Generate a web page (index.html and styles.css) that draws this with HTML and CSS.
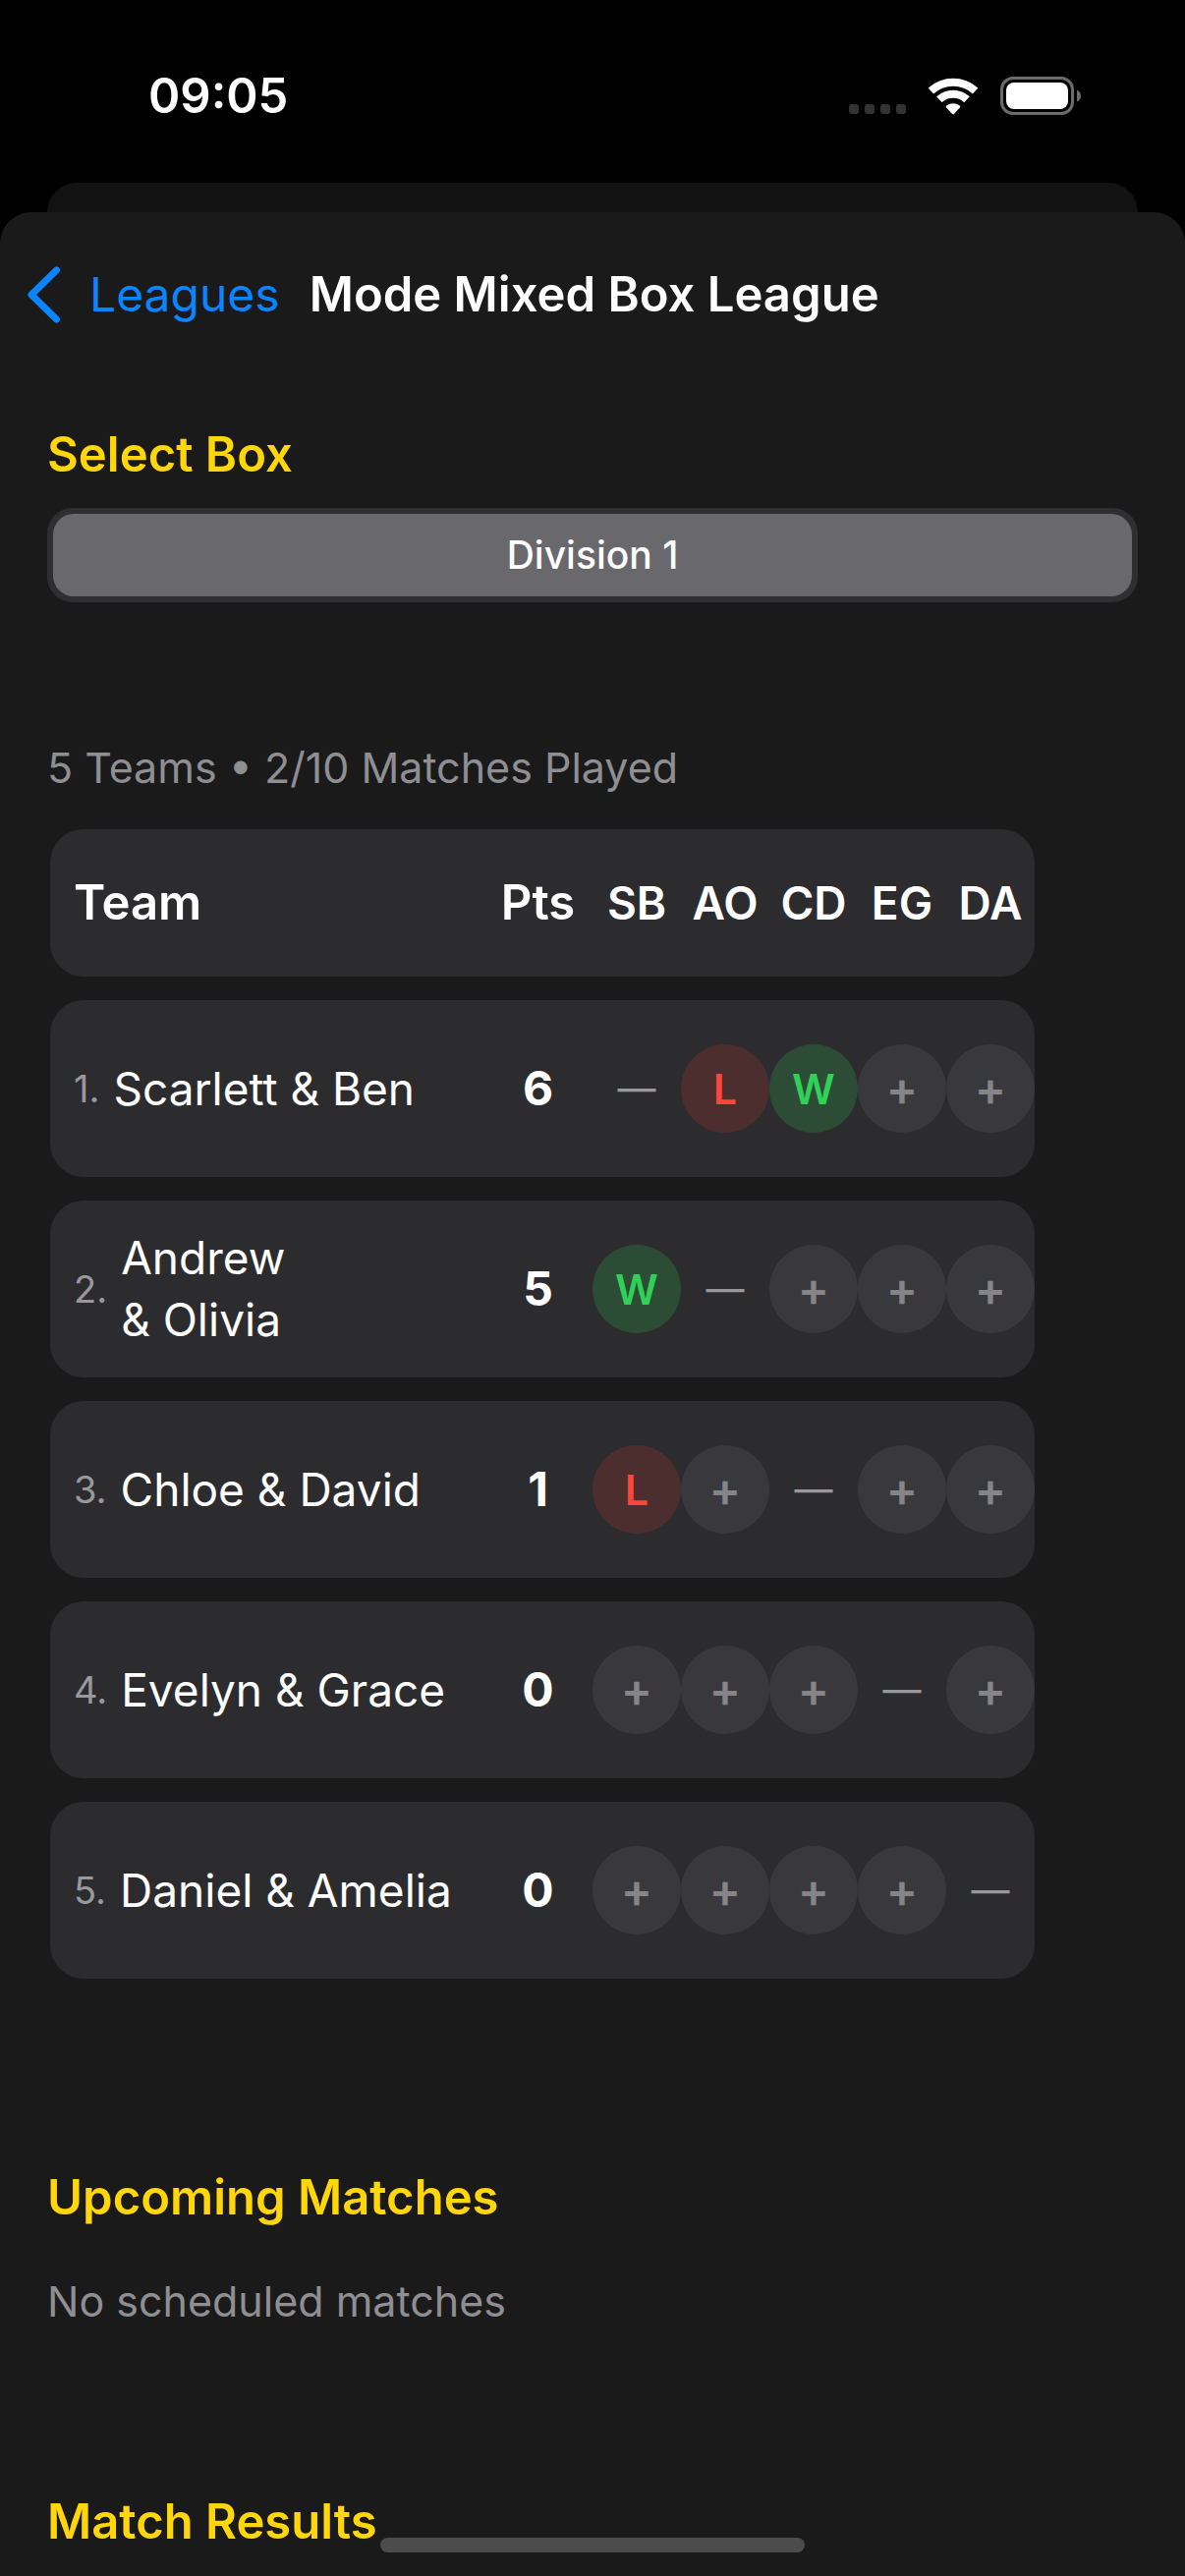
FILE: index.html
```html
<!DOCTYPE html>
<html lang="en">
<head>
  <meta charset="utf-8">
  <meta name="viewport" content="width=device-width">
  <title>Mode Mixed Box League</title>
  <link rel="stylesheet" href="styles.css">
</head>
<body>
  <div class="status-bar">
    <time class="clock" datetime="09:05">09:05</time>
    <div class="indicators">
      <svg width="58" height="40" viewBox="0 0 58 40" fill="#333" aria-hidden="true">
        <rect x="0" y="28" width="10" height="10" rx="3"/>
        <rect x="16" y="28" width="10" height="10" rx="3"/>
        <rect x="32" y="28" width="10" height="10" rx="3"/>
        <rect x="48" y="28" width="10" height="10" rx="3"/>
      </svg>
      <svg width="50" height="40" viewBox="0 0 50 40" aria-hidden="true">
        <g fill="none" stroke="#fff" stroke-width="8">
          <path d="M2.4 14.5A33.4 33.4 0 0 1 47.6 14.5"/>
          <path d="M10.9 23.2A20.8 20.8 0 0 1 39.1 23.2"/>
        </g>
        <path fill="#fff" d="M18 31.2Q17.200 30.200 18.200 29.400A11.500 11.500 0 0 1 31.800 29.400Q32.800 30.200 32 31.200L26 37.900Q25 38.700 24 37.900Z"/>
      </svg>
      <svg width="82" height="40" viewBox="0 0 82 40" aria-hidden="true">
        <rect x="1.500" y="1.500" width="72" height="36" rx="11.500" fill="none" stroke="#6b6b6b" stroke-width="3"/>
        <rect x="6" y="6" width="63" height="27" rx="8" fill="#fff"/>
        <path d="M78 13.500Q82 15.500 82 19.500T78 25.500Z" fill="#6b6b6b"/>
      </svg>
    </div>
  </div>

  <div class="sheet-behind"></div>
  <main class="sheet">
    <header class="nav">
      <a class="back" href="#leagues">
        <svg width="34" height="58" viewBox="0 0 34 58" fill="none" stroke="#0a84ff" stroke-width="7" stroke-linecap="round" stroke-linejoin="round" aria-hidden="true">
          <path d="M29.500 4L4 29L29.500 54"/>
        </svg>
        <span>Leagues</span>
      </a>
      <h1 class="title">Mode Mixed Box League</h1>
    </header>

    <section class="select-box">
      <h2 class="heading" id="select-box">Select Box</h2>
      <div class="segments" role="radiogroup" aria-labelledby="select-box">
        <input class="segment-input" type="radio" id="division-1" name="box" checked>
        <label class="segment" for="division-1">Division 1</label>
      </div>
    </section>

    <section class="standings">
      <p class="note">5 Teams • 2/10 Matches Played</p>
      <div class="table-scroll">
        <table class="grid">
          <colgroup>
            <col class="col-team"><col class="col-points">
            <col class="col-match" span="5">
          </colgroup>
          <thead>
            <tr>
              <th class="team" scope="col">Team</th>
              <th scope="col">Pts</th>
              <th class="rival" scope="col">SB</th>
              <th class="rival" scope="col">AO</th>
              <th class="rival" scope="col">CD</th>
              <th class="rival" scope="col">EG</th>
              <th class="rival" scope="col">DA</th>
            </tr>
          </thead>
          <tbody>
            <tr>
              <th class="team" scope="row"><div class="entry"><span class="rank">1.</span><span>Scarlett &amp; Ben</span></div></th>
              <td class="points">6</td>
              <td class="self">—</td>
              <td><button class="result loss" type="button">L</button></td>
              <td><button class="result win" type="button">W</button></td>
              <td><button class="result" type="button">+</button></td>
              <td><button class="result" type="button">+</button></td>
            </tr>
            <tr>
              <th class="team" scope="row"><div class="entry"><span class="rank">2.</span><span>Andrew<br>&amp; Olivia</span></div></th>
              <td class="points">5</td>
              <td><button class="result win" type="button">W</button></td>
              <td class="self">—</td>
              <td><button class="result" type="button">+</button></td>
              <td><button class="result" type="button">+</button></td>
              <td><button class="result" type="button">+</button></td>
            </tr>
            <tr>
              <th class="team" scope="row"><div class="entry"><span class="rank">3.</span><span>Chloe &amp; David</span></div></th>
              <td class="points">1</td>
              <td><button class="result loss" type="button">L</button></td>
              <td><button class="result" type="button">+</button></td>
              <td class="self">—</td>
              <td><button class="result" type="button">+</button></td>
              <td><button class="result" type="button">+</button></td>
            </tr>
            <tr>
              <th class="team" scope="row"><div class="entry"><span class="rank">4.</span><span>Evelyn &amp; Grace</span></div></th>
              <td class="points">0</td>
              <td><button class="result" type="button">+</button></td>
              <td><button class="result" type="button">+</button></td>
              <td><button class="result" type="button">+</button></td>
              <td class="self">—</td>
              <td><button class="result" type="button">+</button></td>
            </tr>
            <tr>
              <th class="team" scope="row"><div class="entry"><span class="rank">5.</span><span>Daniel &amp; Amelia</span></div></th>
              <td class="points">0</td>
              <td><button class="result" type="button">+</button></td>
              <td><button class="result" type="button">+</button></td>
              <td><button class="result" type="button">+</button></td>
              <td><button class="result" type="button">+</button></td>
              <td class="self">—</td>
            </tr>
          </tbody>
        </table>
      </div>
    </section>

    <section class="upcoming">
      <h2 class="heading">Upcoming Matches</h2>
      <p class="note">No scheduled matches</p>
    </section>

    <section class="results">
      <h2 class="heading">Match Results</h2>
    </section>
  </main>
  <div class="home-indicator"></div>
</body>
</html>
```

FILE: styles.css
```css
* {
  box-sizing: border-box;
}

body {
  margin: 0;
  min-height: 100vh;
  display: flex;
  flex-direction: column;
  background: #000;
  color: #fff;
  font-family: Inter, "Liberation Sans", sans-serif;
  font-size: 48px;
  line-height: 60px;
}

h1, h2, p {
  margin: 0;
}

/* Status bar */
.status-bar {
  display: flex;
  justify-content: space-between;
  align-items: center;
  padding: 68px 106px 58px 151px;
}

.clock {
  font-size: 49px;
  font-weight: 600;
}

.indicators {
  display: flex;
  gap: 23px;
}

/* Stacked sheets */
.sheet-behind {
  height: 30px;
  margin: 0 48px;
  border-radius: 30px 30px 0 0;
  background: #121212;
}

.sheet {
  flex: 1;
  padding: 54px 48px 0;
  border-radius: 32px 32px 0 0;
  background: #1a1a1a;
}

.nav {
  display: flex;
  align-items: center;
  gap: 30px;
  margin-left: -20px;
}

.back {
  display: flex;
  align-items: center;
  gap: 29px;
  color: #0a84ff;
  text-decoration: none;
}

.title {
  font-size: 49px;
  font-weight: 600;
}

.heading {
  color: #ffd60a;
  font-size: 49px;
  font-weight: 600;
}

.note {
  color: #8e8e93;
  font-size: 43px;
}

/* Box picker */
.select-box {
  margin-top: 103px;
}

.segments {
  display: flex;
  margin-top: 24px;
  padding: 6px;
  border-radius: 26px;
  background: #2f2f31;
}

.segment-input {
  position: absolute;
  opacity: 0;
}

.segment {
  flex: 1;
  padding: 12px;
  border-radius: 21px;
  font-size: 39px;
  font-weight: 500;
  text-align: center;
}

.segment-input:checked + .segment {
  background: #69686d;
}

/* Standings grid */
.standings {
  margin-top: 138px;
}

.table-scroll {
  margin: 9px 0 0 3px;
  overflow-x: auto;
}

.grid {
  width: 1002px;
  table-layout: fixed;
  border-spacing: 0 24px;
}

.col-team {
  width: 441px;
}

.col-points {
  width: 111px;
}

.col-match {
  width: 90px;
}

.grid th,
.grid td {
  height: 180px;
  padding: 0;
  background: #2c2c2e;
  text-align: center;
}

.grid thead th {
  height: 150px;
  font-size: 49px;
  font-weight: 600;
}

.grid thead .rival {
  font-size: 46px;
}

.grid .team {
  padding-left: 24px;
  border-radius: 34px 0 0 34px;
  text-align: left;
}

.grid tr > :last-child {
  border-radius: 0 34px 34px 0;
}

.entry {
  display: flex;
  align-items: center;
  gap: 14px;
  font-size: 46px;
  font-weight: 400;
  line-height: 63px;
}

.rank {
  color: #98989d;
  font-size: 38px;
}

.points {
  font-size: 48px;
  font-weight: 700;
}

.self {
  color: #98989d;
  font-size: 39px;
}

.result {
  display: block;
  width: 90px;
  height: 90px;
  padding: 0;
  border: 0;
  border-radius: 50%;
  background: #39383d;
  color: #858489;
  font: inherit;
  font-size: 48px;
  font-weight: 600;
}

.win,
.loss {
  font-size: 43px;
}

.win {
  background: #2d4c35;
  color: #30d158;
}

.loss {
  background: #4c2e2e;
  color: #ff453a;
}

/* Match lists */
.upcoming {
  margin-top: 169px;
}

.upcoming .note {
  margin-top: 45px;
}

.results {
  margin-top: 165px;
}

.home-indicator {
  position: fixed;
  bottom: 24px;
  left: 50%;
  width: 432px;
  height: 15px;
  margin-left: -216px;
  border-radius: 8px;
  background: #4c4c4c;
}
```
